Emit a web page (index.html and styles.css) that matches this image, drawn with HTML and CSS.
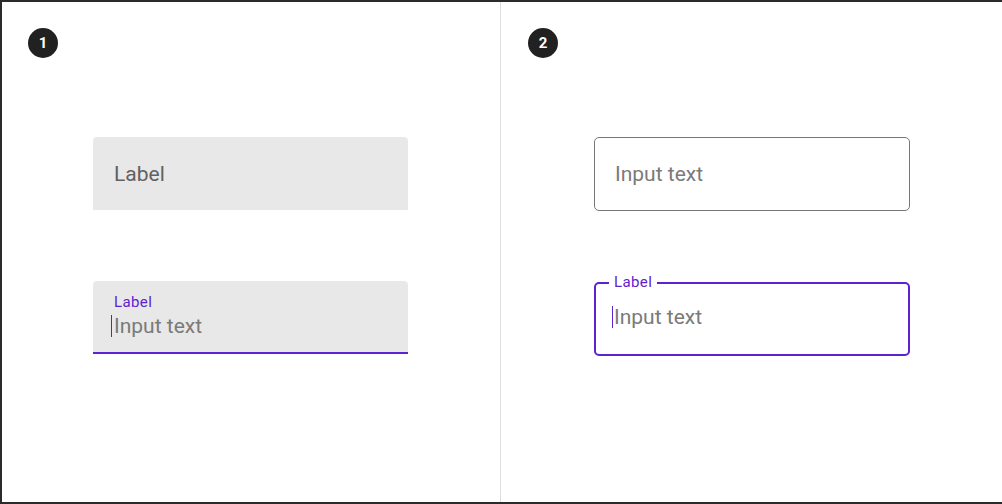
FILE: index.html
```html
<!DOCTYPE html>
<html>
<head>
<meta charset="utf-8">
<link rel="stylesheet" href="styles.css">
</head>
<body>
<div class="frame">
  <section class="panel panel-left">
    <div class="badge">1</div>
    <div class="fields fields-left">
      <div class="filled">
        <span class="filled-label">Label</span>
      </div>
      <div class="filled filled-focus">
        <div class="float-label">Label</div>
        <div class="input-row"><span class="cursor"></span><span class="input-text">Input text</span></div>
      </div>
    </div>
  </section>
  <div class="divider"></div>
  <section class="panel panel-right">
    <div class="badge">2</div>
    <div class="fields fields-right">
      <div class="outlined">
        <span class="input-text">Input text</span>
      </div>
      <fieldset class="outlined-focus">
        <legend class="legend">Label</legend>
        <div class="outlined-row"><span class="cursor"></span><span class="input-text">Input text</span></div>
      </fieldset>
    </div>
  </section>
</div>
</body>
</html>
```

FILE: styles.css
```css
* { box-sizing: border-box; }
html, body { margin: 0; padding: 0; background: #fff; }
body { font-family: Roboto, "Noto Sans", "Liberation Sans", sans-serif; }

.frame {
  width: 1002px;
  height: 504px;
  display: flex;
  border-top: 2px solid #2b2b2b;
  border-left: 2px solid #2b2b2b;
  border-bottom: 2px solid #2b2b2b;
}

.panel { padding-top: 26px; }
.panel-left { width: 498px; padding-left: 26px; }
.panel-right { flex: 1; padding-left: 27px; }
.divider { width: 1px; background: #dedede; }

.badge {
  width: 30px;
  height: 30px;
  border-radius: 50%;
  background: #212121;
  color: #fff;
  font-size: 15px;
  font-weight: 700;
  display: flex;
  align-items: center;
  justify-content: center;
  line-height: 1;
}

.fields { display: flex; flex-direction: column; margin-top: 79px; }
.fields-left { margin-left: 65px; width: 315px; gap: 71px; }
.fields-right { margin-left: 66px; width: 316px; gap: 64px; }

.filled {
  height: 73px;
  background: #e8e8e8;
  border-radius: 4px 4px 0 0;
  display: flex;
  align-items: center;
  padding-left: 21px;
}
.filled-label { font-size: 21px; line-height: 24px; color: #616161; }

.filled-focus {
  display: block;
  padding-top: 14px;
  padding-left: 18px;
  border-bottom: 2px solid #5f22d0;
}
.float-label {
  font-size: 15px;
  line-height: 14px;
  letter-spacing: 0.4px;
  color: #5f22d0;
  padding-left: 3px;
}
.input-row { margin-top: 5px; line-height: 24px; }

.input-text { font-size: 21px; line-height: 24px; color: #7a7a7a; }

.cursor {
  display: inline-block;
  width: 1px;
  height: 22px;
  background: #5f22d0;
  vertical-align: -4px;
  margin-right: 2px;
}

.outlined {
  height: 74px;
  border: 1px solid #777;
  border-radius: 5px;
  display: flex;
  align-items: center;
  padding-left: 20px;
}

.outlined-focus {
  margin: 0;
  padding: 14px 0 23px 0;
  min-width: 0;
  border: 2px solid #5f22d0;
  border-radius: 5px;
}
.legend {
  margin-left: 13px;
  padding: 0 5px 2px;
  font-size: 15px;
  line-height: 14px;
  letter-spacing: 0.4px;
  color: #5f22d0;
}
.outlined-row { padding-left: 16px; line-height: 24px; }
.outlined-row .cursor { margin-right: 1px; }
```
